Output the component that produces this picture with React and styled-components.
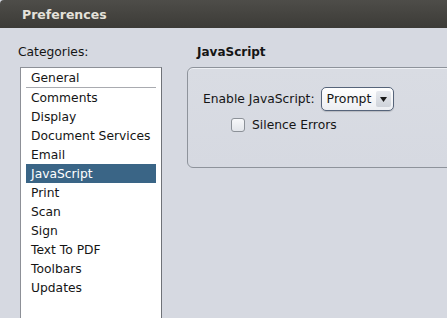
import styled, { createGlobalStyle } from 'styled-components';

const GlobalStyle = createGlobalStyle`
    html, body {
        margin: 0;
        padding: 0;
        width: 447px;
        height: 318px;
        overflow: hidden;
        background: #d6d9e1;
    }
    * {
        box-sizing: border-box;
    }
`

const Window = styled.div`
    width: 447px;
    height: 318px;
    display: flex;
    flex-direction: column;
    overflow: hidden;
    font-family: "DejaVu Sans", "Liberation Sans", sans-serif;
    font-size: 12.3px;
    color: #151515;
    background: #d6d9e1;
`

const TitleBar = styled.div`
    height: 28px;
    flex-shrink: 0;
    display: flex;
    align-items: center;
    padding-left: 22px;
    background: linear-gradient(#4e4d49, #3c3b37);
    border-radius: 4px 0 0 0;
    color: #e4e1da;
    font-weight: bold;
    font-size: 12.5px;
`

const Body = styled.div`
    flex: 1;
    display: flex;
    min-height: 0;
`

const Sidebar = styled.div`
    width: 187px;
    flex-shrink: 0;
    display: flex;
    flex-direction: column;
    padding: 16px 0 0 18px;
`

const Label = styled.div`
    height: 23px;
    line-height: 17px;
`

const List = styled.ul`
    list-style-type: none;
    margin: 0 0 0 2px;
    padding: 0 5px;
    width: 142px;
    flex: 1;
    background: #ffffff;
    border: 1px solid #8d9097;
    border-right-color: #6f7278;
    border-bottom: none;
`

const Item = styled.li`
    height: ${props => props.divider ? '20px' : '19px'};
    line-height: 20px;
    padding-left: 5px;
    white-space: nowrap;
    background: ${props => props.selected ? '#3a6586' : 'transparent'};
    color: ${props => props.selected ? '#ffffff' : '#151515'};
    border-bottom: ${props => props.divider ? '1px solid #a9abb0' : 'none'};
`

const Main = styled.div`
    flex: 1;
    display: flex;
    flex-direction: column;
    padding-top: 16px;
    margin-right: -40px;
`

const Heading = styled.div`
    height: 23px;
    line-height: 17px;
    padding-left: 10px;
    font-weight: bold;
    font-size: 12px;
`

const Group = styled.div`
    height: 101px;
    border: 1px solid #8e939b;
    border-radius: 6px;
    background: linear-gradient(#d9dce3, #d6d9e1);
    box-shadow: inset 0 1px 0 #eef0f4;
    padding: 19px 0 0 15px;
    display: flex;
    flex-direction: column;
    gap: 7px;
`

const Row = styled.div`
    display: flex;
    align-items: center;
    gap: ${props => props.gap || 7}px;
    padding-left: ${props => props.indent || 0}px;
`

const Select = styled.div`
    width: 73px;
    height: 24px;
    display: flex;
    align-items: stretch;
    border: 1px solid #56647a;
    border-radius: 5px;
    background: linear-gradient(#ffffff, #eceef2);
    box-shadow: 0 1px 1px rgba(0, 0, 0, 0.15);
    overflow: hidden;
`

const SelectValue = styled.div`
    flex: 1;
    padding-left: 5px;
    line-height: 22px;
    font-size: 12.5px;
`

const SelectArrow = styled.div`
    width: 15px;
    margin: 3px 2px 3px 0;
    border-radius: 2px;
    background: linear-gradient(#e7e9ee, #cfd3da);
    display: flex;
    align-items: center;
    justify-content: center;
`

const Check = styled.div`
    width: 14px;
    height: 14px;
    border: 1px solid #8c9198;
    border-radius: 3px;
    background: linear-gradient(#f7f8fa, #e3e6eb);
`

const categories = ['Comments', 'Display', 'Document Services', 'Email', 'JavaScript', 'Print', 'Scan', 'Sign', 'Text To PDF', 'Toolbars', 'Updates'];

const App = () => {
    return (
        <Window>
            <GlobalStyle />
            <TitleBar>Preferences</TitleBar>
            <Body>
                <Sidebar>
                    <Label>Categories:</Label>
                    <List>
                        <Item divider>General</Item>
                        {categories.map(c => (
                            <Item key={c} selected={c === 'JavaScript'}>{c}</Item>
                        ))}
                    </List>
                </Sidebar>
                <Main>
                    <Heading>JavaScript</Heading>
                    <Group>
                        <Row gap={6}>
                            Enable JavaScript:
                            <Select>
                                <SelectValue>Prompt</SelectValue>
                                <SelectArrow>
                                    <svg width="7" height="5" viewBox="0 0 7 5">
                                        <path d="M0 0 L7 0 L3.5 5 Z" fill="#1a1a1a" />
                                    </svg>
                                </SelectArrow>
                            </Select>
                        </Row>
                        <Row indent={28}>
                            <Check />
                            Silence Errors
                        </Row>
                    </Group>
                </Main>
            </Body>
        </Window>
    )
}

export default App;
